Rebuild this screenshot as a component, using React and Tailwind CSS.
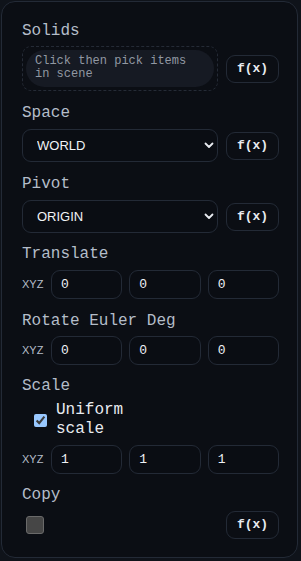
import React, { useState } from 'react';

const mono = "font-['Liberation_Mono',monospace]";

const Label = ({ children, className = '' }) => (
  <div className={`${mono} text-[16px] leading-[20px] text-[#b4bdc9] ${className}`}>{children}</div>
);

const FxButton = () => (
  <button className={`${mono} h-[28px] w-[53px] shrink-0 rounded-[9px] border border-[#232a36] text-[13px] font-bold text-[#e8ebf0]`}>
    f(x)
  </button>
);

const Select = ({ value, options }) => (
  <div className="relative h-[33px] flex-1">
    <select
      defaultValue={value}
      className="h-full w-full appearance-none rounded-[9px] border border-[#232a36] bg-[#0a0d13] pl-[14px] font-['Liberation_Sans',Arial,sans-serif] text-[13px] text-[#f1f3f6] outline-none"
    >
      {options.map((o) => (
        <option key={o}>{o}</option>
      ))}
    </select>
    {/* chevron over the select */}
    <svg className="pointer-events-none absolute right-[4px] top-[13px]" width="10" height="7" viewBox="0 0 10 7">
      <path d="M1.5 1.5 L5 5 L8.5 1.5" fill="none" stroke="#e8ebf0" strokeWidth="1.8" strokeLinecap="round" strokeLinejoin="round" />
    </svg>
  </div>
);

const XyzRow = ({ values, className = '' }) => (
  <div className={`flex h-[29px] items-center ${className}`}>
    <span className="w-[29px] shrink-0 font-['Liberation_Sans',Arial,sans-serif] text-[11px] text-[#b4bdc9]">XYZ</span>
    <div className="flex flex-1 gap-[7px]">
      {values.map((v, i) => (
        <input
          key={i}
          defaultValue={v}
          className={`${mono} h-[29px] w-0 flex-1 rounded-[9px] border border-[#232a36] bg-[#0a0d13] pl-[9px] text-[13px] text-[#eef1f5] outline-none`}
        />
      ))}
    </div>
  </div>
);

export default function App() {
  const [uniform, setUniform] = useState(true);
  const [copy, setCopy] = useState(false);

  return (
    <div className="min-h-[561px] bg-[#0f131a] pt-px">
      <div className="ml-px h-[557px] w-[297px] rounded-[14px] border border-[#232a36] bg-[#0b0e14] pl-5 pr-[18px] pt-[19px]">
        <Label>Solids</Label>
        <div className="mt-[5px] flex items-center gap-[8px]">
          <div className="h-[45px] flex-1 rounded-[9px] border border-dashed border-[#252b36] p-[3px]">
            <div className={`${mono} h-full rounded-[19px] bg-[#161a23] pl-[9px] pr-3 pt-[5px] text-[12px] leading-[13px] text-[#9198a2]`}>
              Click then pick items in scene
            </div>
          </div>
          <FxButton />
        </div>

        <Label className="mt-[12px]">Space</Label>
        <div className="mt-[6px] flex items-center gap-[8px]">
          <Select value="WORLD" options={['WORLD', 'LOCAL']} />
          <FxButton />
        </div>

        <Label className="mt-[12px]">Pivot</Label>
        <div className="mt-[6px] flex items-center gap-[8px]">
          <Select value="ORIGIN" options={['ORIGIN', 'CENTER']} />
          <FxButton />
        </div>

        <Label className="mt-[11px]">Translate</Label>
        <XyzRow className="mt-[6px]" values={['0', '0', '0']} />

        <Label className="mt-[12px]">Rotate Euler Deg</Label>
        <XyzRow className="mt-[5px]" values={['0', '0', '0']} />

        <Label className="mt-[11px]">Scale</Label>
        <label className="mt-[5px] flex items-center gap-[9px] pl-3">
          <input
            type="checkbox"
            checked={uniform}
            onChange={(e) => setUniform(e.target.checked)}
            className="h-[13px] w-[13px] [color-scheme:dark]"
          />
          <span className={`${mono} w-[72px] text-[16px] leading-[19px] text-[#e8ebf0]`}>Uniform scale</span>
        </label>
        <XyzRow className="mt-[6px]" values={['1', '1', '1']} />

        <Label className="mt-[11px]">Copy</Label>
        <div className="mt-[6px] flex items-center justify-between">
          <input
            type="checkbox"
            checked={copy}
            onChange={(e) => setCopy(e.target.checked)}
            className="ml-1 h-[18px] w-[18px] appearance-none rounded-[3px] border border-[#6a6a6a] bg-[#464646]"
          />
          <FxButton />
        </div>
      </div>
    </div>
  );
}
